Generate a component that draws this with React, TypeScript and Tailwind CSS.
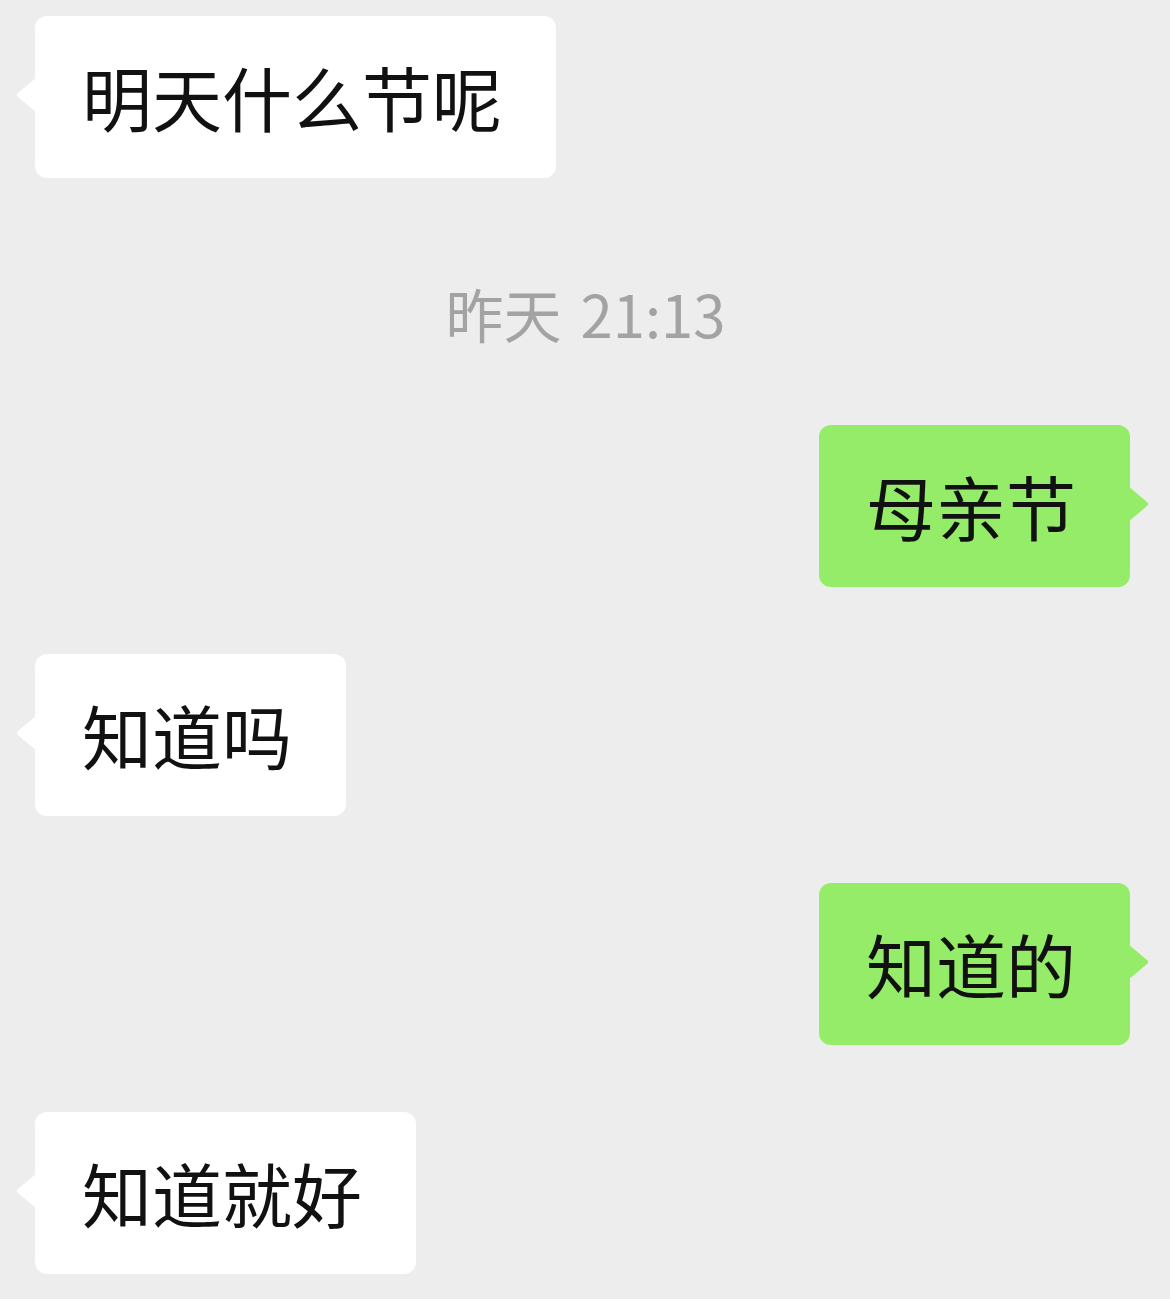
import React from 'react';

type Msg =
    | { kind: 'in' | 'out'; text: string }
    | { kind: 'time'; text: string };

const MESSAGES: Msg[] = [
    { kind: 'in', text: '明天什么节呢' },
    { kind: 'time', text: '昨天 21:13' },
    { kind: 'out', text: '母亲节' },
    { kind: 'in', text: '知道吗' },
    { kind: 'out', text: '知道的' },
    { kind: 'in', text: '知道就好' },
];

const FONT = "font-['PingFang_SC','Noto_Sans_CJK_SC',sans-serif]";

// Little speech-bubble pointer, drawn pointing left; flipped for outgoing.
const Tail: React.FC<{ color: string; side: 'left' | 'right' }> = ({ color, side }) => (
    <svg
        width="22"
        height="40"
        viewBox="0 0 22 40"
        className={`absolute top-[59px] ${side === 'left' ? '-left-[20px]' : '-right-[20px] -scale-x-100'}`}
    >
        <path d="M22 2 L3 18 Q0.5 20 3 22 L22 38 Z" fill={color} />
    </svg>
);

const Bubble: React.FC<{ text: string; out?: boolean }> = ({ text, out }) => (
    <div className={`relative h-[162px] rounded-[12px] pl-[47px] pr-[54px] flex items-center ${out ? 'bg-[#95ec69]' : 'bg-white'}`}>
        <Tail color={out ? '#95ec69' : '#ffffff'} side={out ? 'right' : 'left'} />
        <span className={`${FONT} text-[70px] leading-none text-[#111111] whitespace-nowrap`}>{text}</span>
    </div>
);

export default function App() {
    return (
        <div className="min-h-[1299px] bg-[#ededed] pl-[35px] pr-[40px] pt-[16px] flex flex-col">
            {MESSAGES.map((m, i) => {
                if (m.kind === 'time') {
                    return (
                        <div key={i} className="h-[247px] pt-[22px] flex items-center justify-center pl-[6px]">
                            <span className={`${FONT} text-[58px] leading-none text-[#a3a3a3] [word-spacing:6px]`}>{m.text}</span>
                        </div>
                    );
                }
                const next = MESSAGES[i + 1];
                return (
                    <div
                        key={i}
                        className={`flex ${m.kind === 'out' ? 'justify-end' : 'justify-start'} ${next && next.kind !== 'time' ? 'mb-[67px]' : ''}`}
                    >
                        <Bubble text={m.text} out={m.kind === 'out'} />
                    </div>
                );
            })}
        </div>
    );
}
